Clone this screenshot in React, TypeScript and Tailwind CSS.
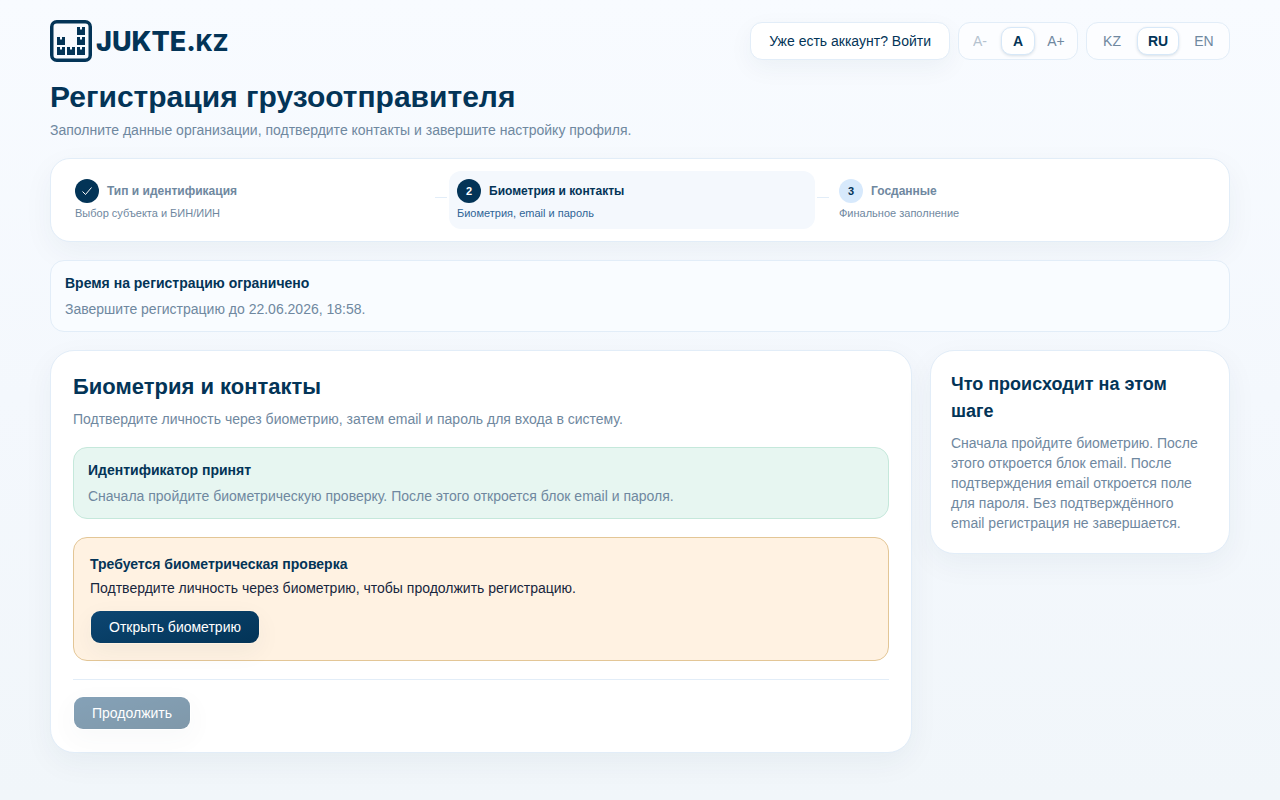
import type { ReactNode } from "react"
import clsx from "clsx"

const steps = [
  { title: "Тип и идентификация", text: "Выбор субъекта и БИН/ИИН", state: "done" },
  { title: "Биометрия и контакты", text: "Биометрия, email и пароль", state: "active" },
  { title: "Госданные", text: "Финальное заполнение", state: "pending" },
]

export default function App() {
  return (
    <div className="min-h-screen bg-linear-to-b from-[#f8fbff] via-[#f4f8fd] to-[#f1f6fa] font-['Liberation_Sans',Arial,sans-serif] text-sm text-[#17263d]">
      <div className="mx-auto max-w-[1220px] px-5 py-5">
        <header className="flex items-center justify-between">
          <Logo />
          <div className="flex gap-2">
            <a
              href="#login"
              className="flex h-[38px] items-center rounded-xl border border-[#e2edf8] bg-white px-[18px] text-[#033457] shadow-[0_8px_24px_rgba(3,52,87,0.05)]"
            >
              Уже есть аккаунт? Войти
            </a>
            <ToggleGroup label="Размер шрифта">
              <button disabled className="h-7 w-[34px] text-[#6f88a0] opacity-50">
                A-
              </button>
              <button className="h-7 w-[34px] rounded-[10px] border border-[#d7e8f8] bg-white font-bold text-[#033457] shadow-[0_1px_3px_rgba(3,52,87,0.15)]">
                A
              </button>
              <button className="h-7 w-[34px] text-[#6f88a0]">A+</button>
            </ToggleGroup>
            <ToggleGroup label="Язык">
              <button className="h-7 w-[42px] text-[#6f88a0]">KZ</button>
              <button className="h-7 w-[42px] rounded-[10px] border border-[#d7e8f8] bg-white font-bold text-[#033457] shadow-[0_1px_3px_rgba(3,52,87,0.15)]">
                RU
              </button>
              <button className="h-7 w-[42px] text-[#6f88a0]">EN</button>
            </ToggleGroup>
          </div>
        </header>

        <h1 className="mt-4 text-3xl leading-[38px] font-bold text-[#033457]">
          Регистрация грузоотправителя
        </h1>
        <p className="mt-1 leading-5 text-[#6f88a0]">
          Заполните данные организации, подтвердите контакты и завершите настройку профиля.
        </p>

        <ol className="mt-[18px] flex rounded-[20px] border border-[#e2edf8] bg-white px-4 py-3 shadow-[0_10px_30px_rgba(3,52,87,0.05)]">
          {steps.map((step, i) => (
            <Step key={step.title} number={i + 1} last={i === steps.length - 1} {...step} />
          ))}
        </ol>

        <Notice
          title="Время на регистрацию ограничено"
          className="mt-[18px] border-[#e2edf8] bg-[#f9fcff]"
        >
          Завершите регистрацию до 22.06.2026, 18:58.
        </Notice>

        <div className="mt-[18px] grid grid-cols-[minmax(0,1fr)_300px] items-start gap-[18px]">
          <main className="rounded-3xl border border-[#e2edf8] bg-white p-[22px] shadow-[0_10px_30px_rgba(3,52,87,0.05)]">
            <h2 className="text-[22px] leading-7 font-bold text-[#033457]">Биометрия и контакты</h2>
            <p className="mt-2 leading-5 text-[#6f88a0]">
              Подтвердите личность через биометрию, затем email и пароль для входа в систему.
            </p>

            <Notice title="Идентификатор принят" className="mt-[18px] border-[#c5e8db] bg-[#e7f6f1]">
              Сначала пройдите биометрическую проверку. После этого откроется блок email и пароля.
            </Notice>

            <section className="mt-[18px] rounded-[14px] border border-[#e3c696] bg-[#fff2e2] p-4 leading-5">
              <h3 className="font-bold text-[#033457]">Требуется биометрическая проверка</h3>
              <p className="mt-1">Подтвердите личность через биометрию, чтобы продолжить регистрацию.</p>
              <PrimaryButton className="mt-3">Открыть биометрию</PrimaryButton>
            </section>

            <div className="mt-[18px] border-t border-[#e2edf8] pt-4">
              <PrimaryButton disabled>Продолжить</PrimaryButton>
            </div>
          </main>

          <aside className="rounded-3xl border border-[#e2edf8] bg-white p-5 shadow-[0_10px_30px_rgba(3,52,87,0.05)]">
            <h3 className="text-lg leading-[27px] font-bold text-[#033457]">Что происходит на этом шаге</h3>
            <p className="mt-2 leading-5 text-[#6f88a0]">
              Сначала пройдите биометрию. После этого откроется блок email. После подтверждения email
              откроется поле для пароля. Без подтверждённого email регистрация не завершается.
            </p>
          </aside>
        </div>
      </div>
    </div>
  )
}

function ToggleGroup({ label, children }: { label: string; children: ReactNode }) {
  return (
    <div
      role="group"
      aria-label={label}
      className="flex h-[38px] items-center gap-1 rounded-xl border border-[#e2edf8] bg-[#fcfdff] px-1"
    >
      {children}
    </div>
  )
}

function Step({
  number,
  title,
  text,
  state,
  last,
}: {
  number: number
  title: string
  text: string
  state: string
  last: boolean
}) {
  const active = state === "active"

  return (
    <li className="flex flex-1 items-start gap-0.5 pr-0.5">
      <div className={clsx("flex-1 rounded-xl p-2", active && "bg-[#f4f8fd]")}>
        <div className="flex items-center gap-2">
          <span
            className={clsx(
              "flex size-6 items-center justify-center rounded-full text-[11px] leading-4 font-bold",
              state === "pending" ? "bg-[#d7e9fc] text-[#033457]" : "bg-[#033457] text-white"
            )}
          >
            {state === "done" ? (
              <svg viewBox="0 0 12 12" className="size-3" fill="none" stroke="currentColor">
                <path d="M1.5 6.5 4.5 9.5 10.5 2.5" />
              </svg>
            ) : (
              number
            )}
          </span>
          <span className={clsx("text-xs font-bold", active ? "text-[#033457]" : "text-[#6f88a0]")}>
            {title}
          </span>
        </div>
        <p className={clsx("mt-0.5 text-[11px] leading-4", active ? "text-[#2f6496]" : "text-[#6f88a0]")}>
          {text}
        </p>
      </div>
      <span className={clsx("mt-[26px] h-px w-3", !last && "bg-[#e2edf8]")} />
    </li>
  )
}

function Notice({
  title,
  className,
  children,
}: {
  title: string
  className: string
  children: ReactNode
}) {
  return (
    <section className={clsx("rounded-[14px] border px-3.5 py-3 leading-5", className)}>
      <h3 className="font-bold text-[#033457]">{title}</h3>
      <p className="mt-1.5 text-[#6f88a0]">{children}</p>
    </section>
  )
}

function PrimaryButton({
  disabled,
  className,
  children,
}: {
  disabled?: boolean
  className?: string
  children: ReactNode
}) {
  return (
    <button
      disabled={disabled}
      className={clsx(
        "block h-[34px] rounded-[10px] border border-transparent bg-linear-165 from-[#0d4672] to-[#033457] bg-clip-padding px-[18px] text-white shadow-[0_8px_24px_rgba(3,52,87,0.05)] disabled:opacity-50",
        className
      )}
    >
      {children}
    </button>
  )
}

function Logo() {
  const boxes = [
    [27, 7],
    [7, 17],
    [27, 17],
    [7, 27],
    [17, 27],
    [27, 27],
  ]

  return (
    <a href="#home" aria-label="JUKTE.KZ" className="flex h-[42px] items-center gap-1 text-[#033457]">
      <svg viewBox="0 0 42 42" className="size-[42px]" fill="none">
        <rect x="1.75" y="1.75" width="38.5" height="38.5" rx="5" stroke="currentColor" strokeWidth="3.5" />
        {boxes.map(([x, y]) => (
          <path key={`${x}-${y}`} d={`M${x} ${y}h3v2.5h2v-2.5h3v8h-8z`} fill="currentColor" />
        ))}
      </svg>
      <span className="pt-0.5 font-[Inter,sans-serif] text-[27px] leading-10 font-extrabold">
        JUKTE.<span className="text-[23px]">KZ</span>
      </span>
    </a>
  )
}
